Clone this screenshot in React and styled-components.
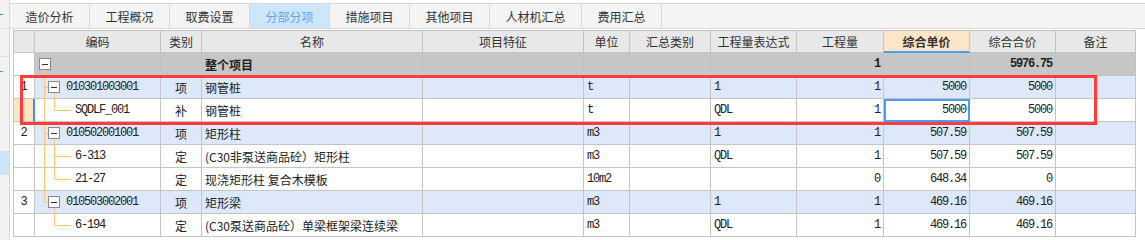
import React from 'react';
import styled, { createGlobalStyle } from 'styled-components';

const GlobalStyle = createGlobalStyle`
  html, body {
    margin: 0;
    padding: 0;
    background: #fff;
    font-family: "Noto Sans CJK SC", "Noto Sans", sans-serif;
  }
`;

// 表格列宽（含右边框）
const COLS = '21px 126px 41px 221px 161px 46px 81px 86px 87px 86px 86px 80px';

const TABS = ['造价分析', '工程概况', '取费设置', '分部分项', '措施项目', '其他项目', '人材机汇总', '费用汇总'];

const HEADERS = ['', '编码', '类别', '名称', '项目特征', '单位', '汇总类别', '工程量表达式', '工程量', '综合单价', '综合合价', '备注'];

const ROWS = [
  { type: 'root', num: '', code: '', cat: '', name: '整个项目', unit: '', expr: '', qty: '1', price: '', total: '5976.75' },
  { type: 'item', num: '1', code: '010301003001', cat: '项', name: '钢管桩', unit: 't', expr: '1', qty: '1', price: '5000', total: '5000' },
  { type: 'child', last: true, num: '', code: 'SQDLF_001', cat: '补', name: '钢管桩', unit: 't', expr: 'QDL', qty: '1', price: '5000', total: '5000', current: true },
  { type: 'item', num: '2', code: '010502001001', cat: '项', name: '矩形柱', unit: 'm3', expr: '1', qty: '1', price: '507.59', total: '507.59' },
  { type: 'child', num: '', code: '6-313', cat: '定', name: '(C30非泵送商品砼）矩形柱', unit: 'm3', expr: 'QDL', qty: '1', price: '507.59', total: '507.59' },
  { type: 'child', last: true, num: '', code: '21-27', cat: '定', name: '现浇矩形柱 复合木模板', unit: '10m2', expr: '', qty: '0', price: '648.34', total: '0' },
  { type: 'item', last: true, num: '3', code: '010503002001', cat: '项', name: '矩形梁', unit: 'm3', expr: '1', qty: '1', price: '469.16', total: '469.16' },
  { type: 'child', last: true, parentLast: true, num: '', code: '6-194', cat: '定', name: '(C30泵送商品砼）单梁框架梁连续梁', unit: 'm3', expr: 'QDL', qty: '1', price: '469.16', total: '469.16' },
];

const LINE = '#ffc67c';

const MinusBox = ({ x }) => (
  <g>
    <rect x={x + 0.5} y={5.5} width={11} height={11} fill="#fff" stroke="#8a8a8a" />
    <line x1={x + 3} y1={11.5} x2={x + 9} y2={11.5} stroke="#333" />
  </g>
);

const TreeGutter = ({ row }) => {
  if (row.type === 'root') {
    return (
      <TreeSvg width={18} height={23}>
        <line x1={9.5} y1={17} x2={9.5} y2={23} stroke={LINE} />
        <MinusBox x={4} />
      </TreeSvg>
    );
  }
  if (row.type === 'item') {
    return (
      <TreeSvg width={30} height={23}>
        <line x1={9.5} y1={0} x2={9.5} y2={row.last ? 11.5 : 23} stroke={LINE} />
        <line x1={9.5} y1={11.5} x2={13} y2={11.5} stroke={LINE} />
        <line x1={19.5} y1={17} x2={19.5} y2={23} stroke={LINE} />
        <MinusBox x={13} />
      </TreeSvg>
    );
  }
  return (
    <TreeSvg width={39} height={23}>
      {!row.parentLast && <line x1={9.5} y1={0} x2={9.5} y2={23} stroke={LINE} />}
      <line x1={19.5} y1={0} x2={19.5} y2={row.last ? 11.5 : 23} stroke={LINE} />
      <line x1={19.5} y1={11.5} x2={36} y2={11.5} stroke={LINE} />
    </TreeSvg>
  );
};

const App = () => {
  return (
    <>
      <GlobalStyle />
      <Page>
        <LeftStrip>
          <StripCell h={29}><Tick /></StripCell>
          <StripCell h={28} />
          <StripCell h={95} top={14}><Tick /></StripCell>
          <StripCell h={23} active />
          <StripCell h={65} last />
        </LeftStrip>

        <Main>
          <TabBar>
            {TABS.map((t, i) => (
              <Tab key={t} w={i === 6 ? 92 : 80} active={i === 3}>{t}</Tab>
            ))}
            <TabRest />
          </TabBar>

          <Grid>
            <HeaderRow>
              {HEADERS.map((h, i) => (
                <HeadCell key={i} hot={h === '综合单价'}>{h}</HeadCell>
              ))}
            </HeaderRow>

            {ROWS.map((r, i) => (
              <Row key={i} kind={r.type}>
                <NumCell current={r.current}>{r.num}</NumCell>
                <CodeCell>
                  <TreeGutter row={r} />
                  <Mono>{r.code}</Mono>
                </CodeCell>
                <Cell align="center">{r.cat}</Cell>
                <Cell bold={r.type === 'root'}>{r.name}</Cell>
                <Cell />
                <Cell><Mono>{r.unit}</Mono></Cell>
                <Cell />
                <Cell><Mono>{r.expr}</Mono></Cell>
                <Cell align="right"><Mono bold={r.type === 'root'}>{r.qty}</Mono></Cell>
                <Cell align="right" selected={r.current}><Mono>{r.price}</Mono></Cell>
                <Cell align="right"><Mono bold={r.type === 'root'}>{r.total}</Mono></Cell>
                <Cell />
              </Row>
            ))}
          </Grid>
        </Main>

        {/* 红色标注框 */}
        <Highlight />
      </Page>
    </>
  );
};

const Page = styled.div`
  position: relative;
  display: flex;
  width: 1145px;
  height: 240px;
  overflow: hidden;
  background: #fff;
`;

const LeftStrip = styled.div`
  width: 9px;
  border-right: 1px solid #d9d9d9;
  background: #f2f2f2;
  display: flex;
  flex-direction: column;
`;

const StripCell = styled.div`
  height: ${({ h }) => h}px;
  box-sizing: border-box;
  border-bottom: ${({ last }) => (last ? 'none' : '1px solid #e0e0e0')};
  background: ${({ active }) => (active ? '#cde5f9' : 'transparent')};
  display: flex;
  align-items: ${({ top }) => (top ? 'flex-start' : 'center')};
  padding-top: ${({ top }) => (top ? `${top}px` : '0')};
`;

const Tick = styled.span`
  width: 3px;
  height: 1px;
  background: #4a90e2;
`;

const Main = styled.div`
  flex: 1;
  display: flex;
  flex-direction: column;
  padding-top: 3px;
`;

const TabBar = styled.div`
  display: flex;
  height: 26px;
  box-sizing: border-box;
  border-top: 1px solid #d8d8d8;
  border-bottom: 1px solid #d8d8d8;
  background: #f4f4f4;
`;

const Tab = styled.div`
  width: ${({ w }) => w}px;
  box-sizing: border-box;
  border-right: 1px solid #d8d8d8;
  display: flex;
  align-items: center;
  justify-content: center;
  font-size: 12px;
  color: ${({ active }) => (active ? '#5fa5ee' : '#333')};
  background: ${({ active }) => (active ? '#cde6fb' : 'transparent')};
`;

const TabRest = styled.div`
  flex: 1;
`;

const Grid = styled.div`
  margin: 1px 0 0 3px;
  width: 1122px;
  border-top: 1px solid #c4c4c4;
  border-left: 1px solid #c4c4c4;
`;

const HeaderRow = styled.div`
  display: grid;
  grid-template-columns: ${COLS};
  height: 22px;
  background: #e8e8e8;
`;

const HeadCell = styled.div`
  box-sizing: border-box;
  border-right: 1px solid #c4c4c4;
  border-bottom: ${({ hot }) => (hot ? '2px solid #4a9df5' : '1px solid #c4c4c4')};
  background: ${({ hot }) => (hot ? '#fde6c8' : 'transparent')};
  display: flex;
  align-items: center;
  justify-content: center;
  font-size: 12px;
  font-weight: ${({ hot }) => (hot ? 700 : 400)};
  color: #333;
`;

const rowBg = { root: '#c6c6c6', item: '#dde9fb', child: '#fff' };

const Row = styled.div`
  display: grid;
  grid-template-columns: ${COLS};
  height: 23px;
  background: ${({ kind }) => rowBg[kind]};
`;

const Cell = styled.div`
  box-sizing: border-box;
  border-right: 1px solid #c4c4c4;
  border-bottom: 1px solid #c4c4c4;
  display: flex;
  align-items: center;
  justify-content: ${({ align }) => (align === 'center' ? 'center' : align === 'right' ? 'flex-end' : 'flex-start')};
  padding: 0 3px;
  font-size: 12px;
  font-weight: ${({ bold }) => (bold ? 700 : 400)};
  color: #222;
  white-space: nowrap;
  overflow: hidden;
  outline: ${({ selected }) => (selected ? '2px solid #4a9df5' : 'none')};
  outline-offset: -2px;
  background: ${({ selected }) => (selected ? '#fff' : 'transparent')};
`;

const NumCell = styled(Cell)`
  justify-content: center;
  padding: 0;
  background: ${({ current }) => (current ? '#fde5c6' : '#fff')};
  border-right: ${({ current }) => (current ? '2px solid #3d8ef0' : '1px solid #c4c4c4')};
  font-family: "Liberation Mono", monospace;
  font-size: 12px;
`;

const CodeCell = styled(Cell)`
  padding: 0;
  overflow: visible;
  align-items: center;
`;

const TreeSvg = styled.svg`
  flex: none;
  align-self: flex-start;
  margin-bottom: -1px;
  margin-right: 1px;
`;

const Mono = styled.span`
  font-family: "Liberation Mono", "DejaVu Sans Mono", monospace;
  font-size: 12px;
  letter-spacing: -1.2px;
  font-weight: ${({ bold }) => (bold ? 700 : 400)};
  color: #222;
`;

const Highlight = styled.div`
  position: absolute;
  left: 20px;
  top: 75px;
  width: 1077px;
  height: 50px;
  box-sizing: border-box;
  border: 3px solid #ff3b3b;
  pointer-events: none;
`;

export default App;
